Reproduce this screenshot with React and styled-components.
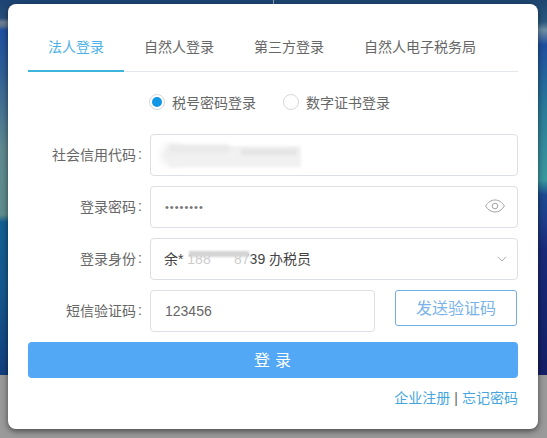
import React from "react";
import styled, { createGlobalStyle } from "styled-components";

const Global = createGlobalStyle`
  html, body { margin: 0; padding: 0; }
  body { font-family: "Liberation Sans", "Noto Sans CJK SC", sans-serif; }
`;

const Page = styled.div`
  width: 547px;
  height: 438px;
  overflow: hidden;
  box-sizing: border-box;
  padding: 4px 9px 0 8px;
  background:
    linear-gradient(#9a9a9a, #9a9a9a) 0 375px / 100% 63px no-repeat,
    linear-gradient(#1c4472 0, #2a4f7c 18px, #6d7f93 22px, #5e7590 26px, #1f4fa0 30px, #2f5f96 70px, #5f8a90 150px, #5f8d8e 215px, #125f92 222px, #15598f 290px, #123f7e 375px) 0 0 / 50% 100% no-repeat,
    linear-gradient(#1d4570 0, #2a5a80 22px, #6f8fa6 30px, #1f4fa0 45px, #2c7c9a 110px, #3b9aa0 180px, #1b4a92 195px, #1f3f8c 220px, #1a2a7a 250px, #141f66 375px) 100% 0 / 50% 100% no-repeat;
`;

const Card = styled.div`
  width: 530px;
  height: 425px;
  box-sizing: border-box;
  padding: 20px 20px 0;
  background: #fff;
  border-radius: 8px;
  box-shadow: 0 2px 6px rgba(0, 0, 0, 0.55);
`;

const Tabs = styled.div`
  display: flex;
  height: 47px;
  border-bottom: 1px solid #e4e7ed;
`;

const Tab = styled.div`
  height: 48px;
  box-sizing: border-box;
  padding: 0 20px;
  line-height: 46px;
  font-size: 14px;
  color: ${(p) => (p.$active ? "#4db1e6" : "#666")};
  border-bottom: 2px solid ${(p) => (p.$active ? "#3cb4dc" : "transparent")};
`;

const Radios = styled.div`
  display: flex;
  justify-content: center;
  gap: 27px;
  height: 20px;
  margin: 20px 7px 22px 0;
`;

const RadioItem = styled.label`
  display: flex;
  align-items: center;
  gap: 7px;
  font-size: 14px;
  color: #666;
`;

const RadioDot = styled.span`
  width: 16px;
  height: 16px;
  box-sizing: border-box;
  border-radius: 50%;
  border: 1px solid #d4d7dc;
  display: flex;
  align-items: center;
  justify-content: center;
  &::after {
    content: "";
    width: 10px;
    height: 10px;
    border-radius: 50%;
    background: ${(p) => (p.$on ? "#1296e6" : "transparent")};
  }
`;

const Form = styled.div`
  display: grid;
  grid-template-columns: 122px 1fr;
  grid-auto-rows: 42px;
  row-gap: 10px;
`;

const Label = styled.div`
  display: flex;
  align-items: center;
  justify-content: flex-end;
  padding: 0 8px 2px 0;
  font-size: 14px;
  color: #666;
`;

const Colon = styled.span`
  margin-left: 2px;
`;

const Field = styled.div`
  position: relative;
  display: flex;
  align-items: center;
  box-sizing: border-box;
  border: 1px solid #dcdfe6;
  border-radius: 4px;
  padding: 0 12px 0 14px;
  background: #fff;
`;

const TextInput = styled.input`
  flex: 1;
  min-width: 0;
  border: 0;
  outline: 0;
  padding: 0;
  background: transparent;
  font-family: "Liberation Sans", "Noto Sans CJK SC", sans-serif;
  font-size: 14px;
  color: #666;
`;

const PasswordInput = styled(TextInput)`
  font-size: 11px;
  letter-spacing: 1px;
  color: #777;
  margin-bottom: 1px;
`;

const SelectText = styled.div`
  flex: 1;
  font-size: 14px;
  color: #444;
  margin-left: -1px;
  padding-bottom: 2px;
  white-space: pre;
`;

const Blur = styled.div`
  position: absolute;
  left: ${(p) => p.$x}px;
  top: ${(p) => p.$y}px;
  width: ${(p) => p.$w}px;
  height: ${(p) => p.$h}px;
  background: ${(p) => p.$c};
  filter: blur(${(p) => p.$b}px);
  border-radius: ${(p) => p.$r || 0}px;
`;

const SmsRow = styled.div`
  display: flex;
  align-items: flex-start;
  gap: 20px;
`;

const SmsField = styled(Field)`
  width: 225px;
  height: 42px;
`;

const SendButton = styled.button`
  width: 122px;
  height: 36px;
  box-sizing: border-box;
  border: 1px solid #6fb0e6;
  border-radius: 3px;
  background: #fff;
  padding: 0 0 2px;
  font-family: "Liberation Sans", "Noto Sans CJK SC", sans-serif;
  font-size: 16px;
  color: #7ab3ea;
`;

const LoginButton = styled.button`
  display: block;
  width: 100%;
  height: 36px;
  margin-top: 10px;
  border: 0;
  border-radius: 4px;
  background: #52a8f5;
  color: #fff;
  padding: 0 0 2px 4px;
  font-family: "Liberation Sans", "Noto Sans CJK SC", sans-serif;
  font-size: 16px;
  letter-spacing: 5px;
`;

const Links = styled.div`
  display: flex;
  justify-content: flex-end;
  gap: 4px;
  margin-top: 10px;
  line-height: 20px;
  font-size: 14px;
  color: #666;
`;

const LinkText = styled.a`
  color: #45a6de;
  text-decoration: none;
`;

const EyeIcon = styled.svg`
  margin-bottom: 2px;
`;

const ChevronIcon = styled.svg`
  margin-right: -2px;
`;

const Eye = () => (
  <EyeIcon width="20" height="14" viewBox="0 0 20 14" fill="none" stroke="#a3a3a3" strokeWidth="1">
    <path d="M0.6 7C3 3 6.3 1 10 1s7 2 9.4 6c-2.4 4-5.7 6-9.4 6S3 11 0.6 7z" />
    <circle cx="10" cy="7" r="2.8" />
  </EyeIcon>
);

const Chevron = () => (
  <ChevronIcon width="10" height="6" viewBox="0 0 10 6" fill="none" stroke="#aaa" strokeWidth="1">
    <path d="M1 0.8L5 5l4-4.2" />
  </ChevronIcon>
);

export default function App() {
  return (
    <Page>
      <Global />
      <Card>
        <Tabs>
          <Tab $active>法人登录</Tab>
          <Tab>自然人登录</Tab>
          <Tab>第三方登录</Tab>
          <Tab>自然人电子税务局</Tab>
        </Tabs>
        <Radios>
          <RadioItem><RadioDot $on />税号密码登录</RadioItem>
          <RadioItem><RadioDot />数字证书登录</RadioItem>
        </Radios>
        <Form>
          <Label>社会信用代码<Colon>:</Colon></Label>
          <Field>
            <Blur $x={10} $y={9} $w={22} $h={22} $c="#f0f0f0" $b={3} $r={10} />
            <Blur $x={18} $y={11} $w={132} $h={21} $c="#f1f1f1" $b={1.5} />
            <Blur $x={18} $y={10} $w={60} $h={7} $c="#e8e8e8" $b={2} />
            <Blur $x={90} $y={14} $w={56} $h={6} $c="#e4e4e4" $b={1.5} />
          </Field>
          <Label>登录密码<Colon>:</Colon></Label>
          <Field>
            <PasswordInput type="password" readOnly value="12345678" />
            <Eye />
          </Field>
          <Label>登录身份<Colon>:</Colon></Label>
          <Field>
            <SelectText>余* 188 {"     "}8739 办税员</SelectText>
            <Blur $x={36} $y={16} $w={64} $h={12} $c="rgba(255,255,255,0.72)" $b={0.8} />
            <Blur $x={38} $y={12} $w={60} $h={6} $c="#d4d4d4" $b={1.2} />
            <Chevron />
          </Field>
          <Label>短信验证码<Colon>:</Colon></Label>
          <SmsRow>
            <SmsField>
              <TextInput readOnly value="123456" />
            </SmsField>
            <SendButton>发送验证码</SendButton>
          </SmsRow>
        </Form>
        <LoginButton>登录</LoginButton>
        <Links>
          <LinkText>企业注册</LinkText>|<LinkText>忘记密码</LinkText>
        </Links>
      </Card>
    </Page>
  );
}
